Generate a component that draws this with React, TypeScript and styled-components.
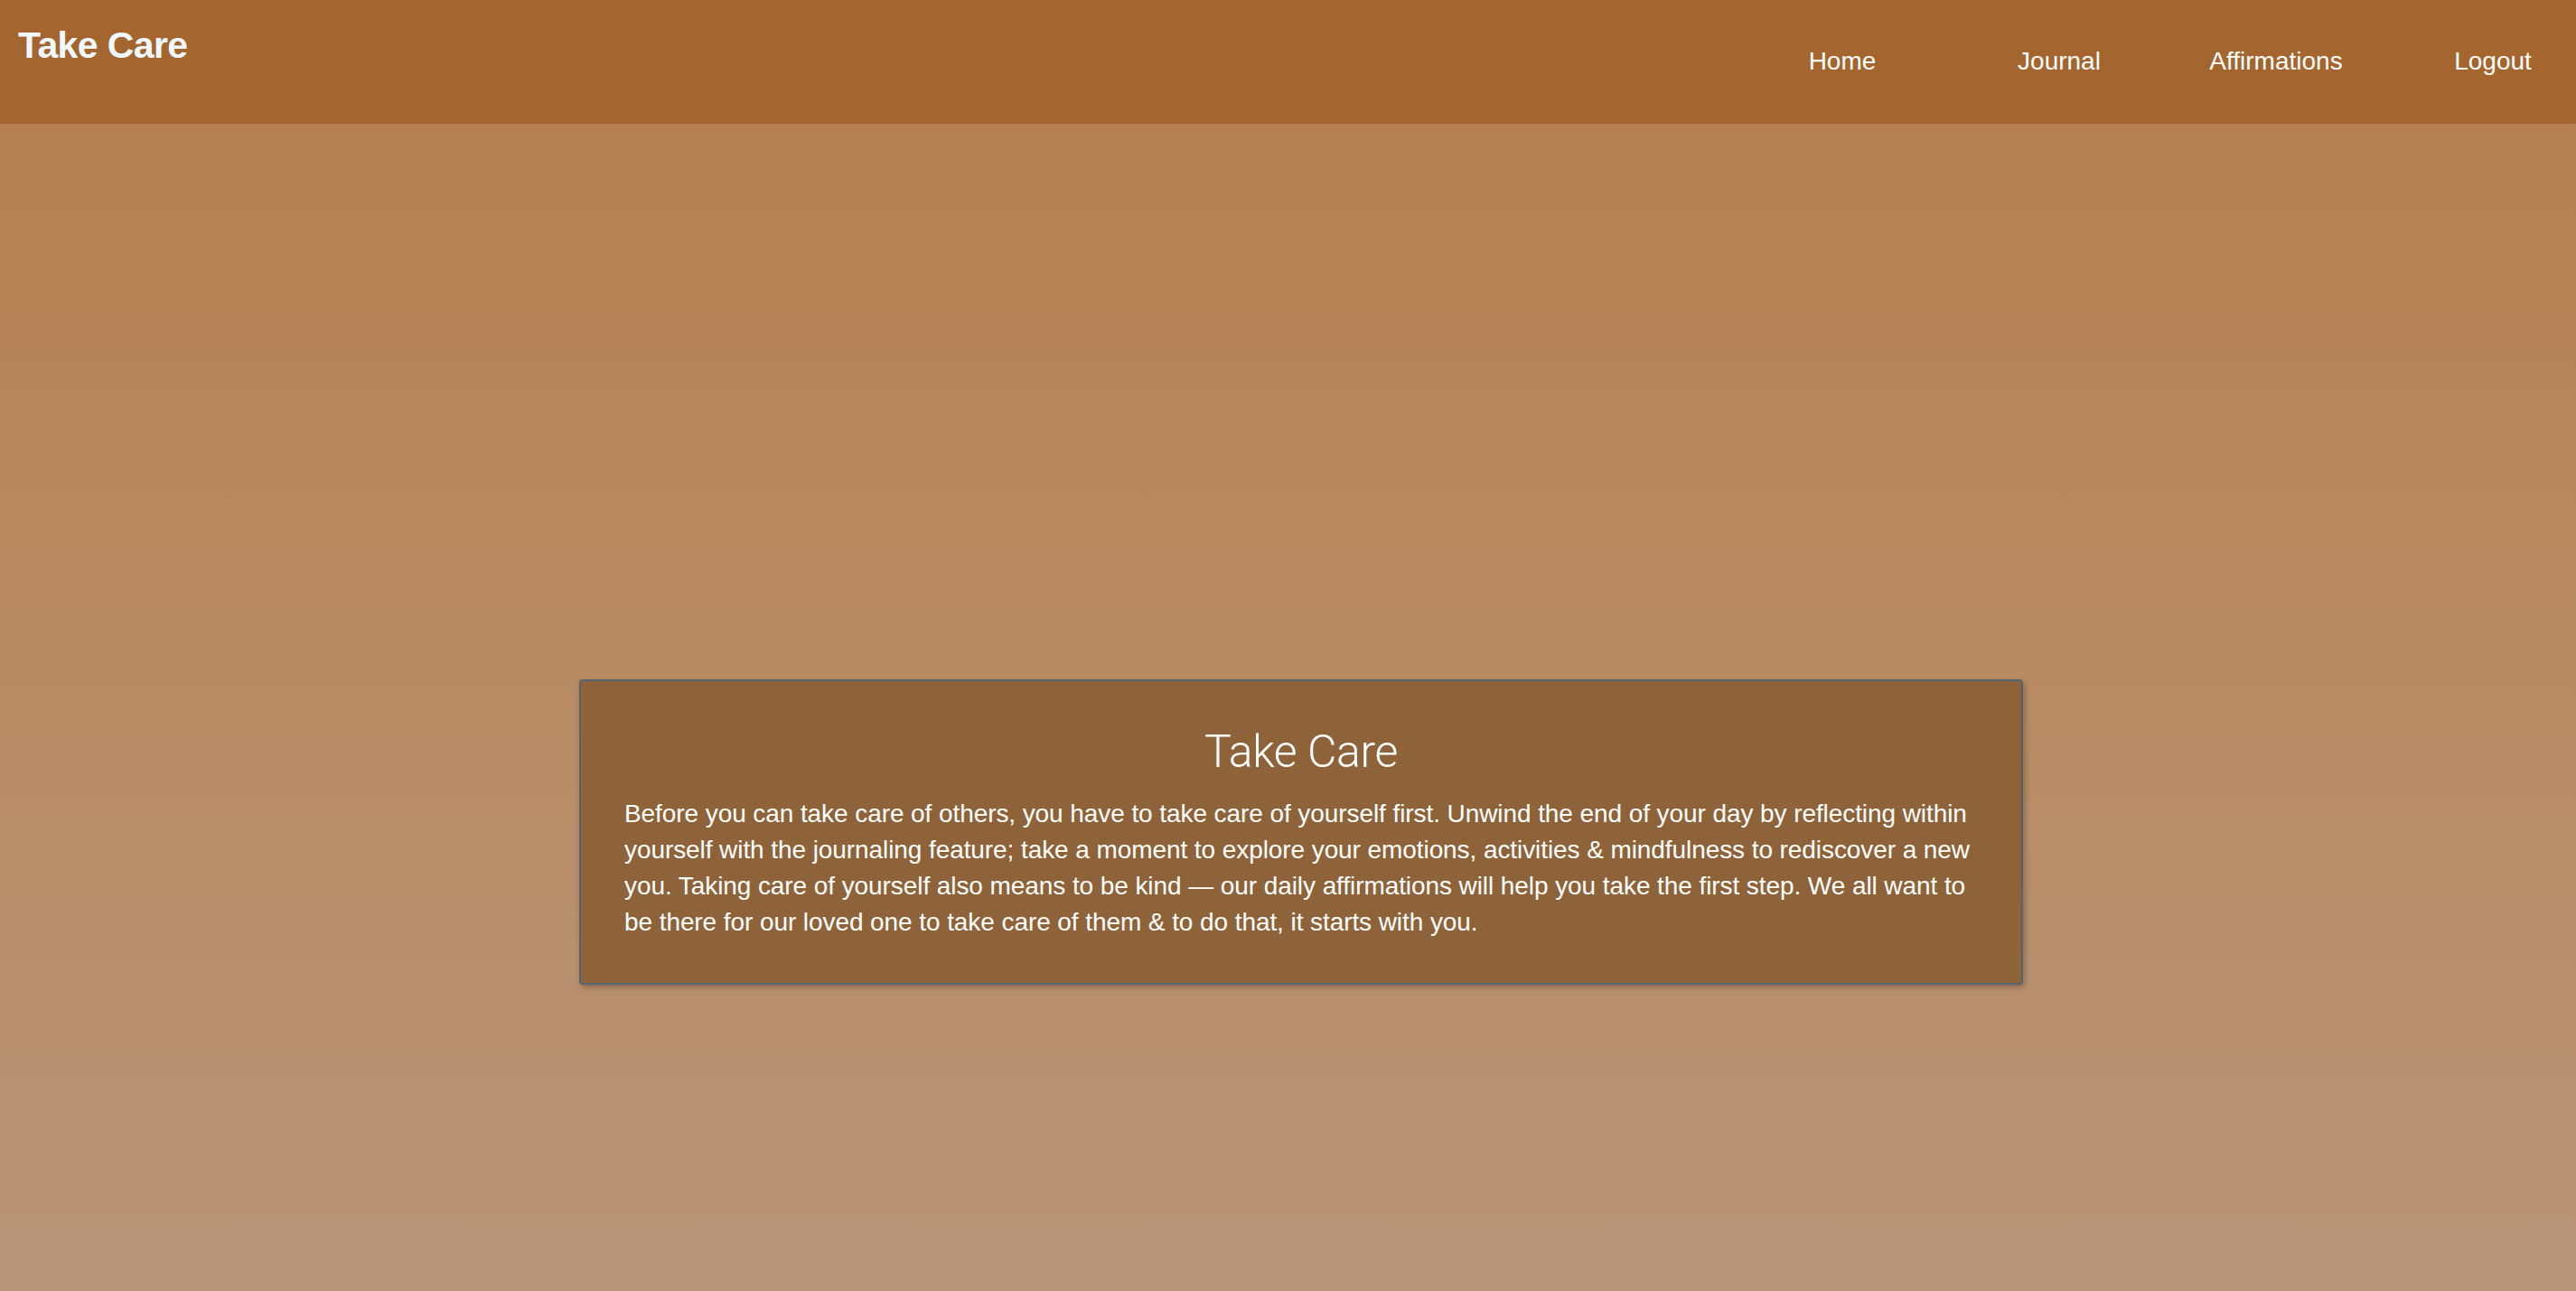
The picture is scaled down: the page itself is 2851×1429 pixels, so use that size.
import React from "react";
import styled, { createGlobalStyle } from "styled-components";

const GlobalStyle = createGlobalStyle`
  * { box-sizing: border-box; }
  html, body { margin: 0; padding: 0; }
  body {
    font-family: "Liberation Sans", Arial, Helvetica, sans-serif;
    background: #b8957a;
  }
`;

const Page = styled.div`
  min-height: 1429px;
  display: flex;
  flex-direction: column;
  background: linear-gradient(180deg, #b57e4f 0%, #b88a62 50%, #b8957a 100%);
`;

const Header = styled.header`
  height: 137px;
  background: #a5652f;
  display: flex;
  justify-content: space-between;
  align-items: flex-start;
  padding-left: 20px;
`;

const Logo = styled.h1`
  margin: 30px 0 0;
  font-size: 41px;
  line-height: 1;
  font-weight: 700;
  letter-spacing: -0.6px;
  color: #f0f8ff;
`;

const Nav = styled.nav`
  display: flex;
  gap: 56px;
  padding-top: 54px;
`;

const NavLink = styled.a`
  width: 184px;
  text-align: center;
  font-size: 28px;
  line-height: 1;
  color: #ffffff;
  text-decoration: none;
  cursor: pointer;
`;

const Main = styled.main`
  flex: 1;
  display: flex;
  justify-content: center;
  align-items: flex-start;
  padding-top: 615px;
  padding-left: 29px;
`;

const Card = styled.section`
  width: 1598px;
  background: #8f6339;
  border: 2px solid #536570;
  border-radius: 4px;
  padding: 49px 48px 47px;
  box-shadow: 2px 3px 6px rgba(60, 40, 20, 0.35);
  color: #ffffff;
`;

const Title = styled.h2`
  margin: 0 0 20px;
  text-align: center;
  font-family: Roboto, "Liberation Sans", sans-serif;
  font-weight: 300;
  font-size: 50px;
  line-height: normal;
  letter-spacing: -0.4px;
`;

const Body = styled.p`
  margin: 0;
  font-size: 28px;
  line-height: 40px;
  letter-spacing: -0.08px;
`;

const links = ["Home", "Journal", "Affirmations", "Logout"];

export default function App() {
  return (
    <>
      <GlobalStyle />
      <Page>
        <Header>
          <Logo>Take Care</Logo>
          <Nav>
            {links.map((l) => (
              <NavLink key={l}>{l}</NavLink>
            ))}
          </Nav>
        </Header>
        <Main>
          <Card>
            <Title>Take Care</Title>
            <Body>
              Before you can take care of others, you have to take care of yourself first. Unwind the end of your day by
              reflecting within yourself with the journaling feature; take a moment to explore your emotions, activities
              &amp; mindfulness to rediscover a new you. Taking care of yourself also means to be kind — our daily
              affirmations will help you take the first step. We all want to be there for our loved one to take care of
              them &amp; to do that, it starts with you.
            </Body>
          </Card>
        </Main>
      </Page>
    </>
  );
}
